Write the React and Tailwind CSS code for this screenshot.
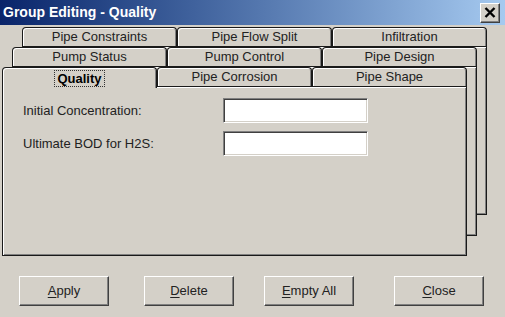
const font = { fontFamily: '"Liberation Sans", Arial, sans-serif' };

function Tab({ label, selected }) {
  if (selected) {
    return (
      <div className="relative z-10 w-[155px] h-[21px] -mb-[2px] bg-[#d4d0c8] border border-b-0 border-[#1a1a1a] rounded-t-[4px] shadow-[inset_1px_1px_#fff,inset_-1px_0_#808080] flex items-center justify-center">
        <span className="font-bold text-[13px] leading-[13px] text-black px-[2px] py-[1px] border border-dotted border-[#333]">
          {label}
        </span>
      </div>
    );
  }
  return (
    <div className="w-[155px] h-[19px] bg-[#d4d0c8] border border-b-0 border-[#1a1a1a] rounded-t-[4px] shadow-[inset_1px_1px_#fff,inset_-1px_0_#808080] flex items-center justify-center text-[13px] text-[#222]">
      {label}
    </div>
  );
}

function Page({ tabs, selected, bodyH, offset, children }) {
  return (
    <div className={`col-start-1 row-start-1 w-[465px] flex flex-col ${offset}`}>
      <div className="flex items-end h-[19px]">
        {tabs.map((t) => (
          <Tab key={t} label={t} selected={t === selected} />
        ))}
      </div>
      <div
        className="bg-[#d4d0c8] border border-[#1a1a1a] shadow-[inset_1px_1px_#fff,inset_-1px_-1px_#808080]"
        style={{ height: bodyH }}
      >
        {children}
      </div>
    </div>
  );
}

function Field({ label }) {
  return (
    <>
      <div className="h-[25px] flex items-center text-[13px] text-[#222]">{label}</div>
      <div className="h-[25px] bg-white border border-t-[#808080] border-l-[#808080] border-r-white border-b-white shadow-[inset_1px_1px_#404040,inset_-1px_-1px_#d4d0c8]" />
    </>
  );
}

function Button({ label, ml }) {
  const first = label[0];
  const rest = label.slice(1);
  return (
    <button
      className={`w-[90px] h-[30px] bg-[#d4d0c8] border border-t-white border-l-white border-r-[#404040] border-b-[#404040] shadow-[inset_-1px_-1px_#808080] text-[13px] text-[#222] flex items-center justify-center ${ml}`}
    >
      <span className="underline underline-offset-2">{first}</span>
      {rest}
    </button>
  );
}

export default function App() {
  return (
    <div className="w-[505px] h-[317px] bg-[#d4d0c8] flex flex-col overflow-hidden" style={font}>
      <div className="h-[25px] flex items-center justify-between bg-gradient-to-r from-[#0a246a] to-[#a6caf0] pl-[3px] pr-[5px]">
        <span className="text-white font-bold text-[14px]">Group Editing - Quality</span>
        <div className="w-[20px] h-[20px] bg-[#d4d0c8] border border-t-white border-l-white border-r-[#404040] border-b-[#404040] shadow-[inset_-1px_-1px_#808080] flex items-center justify-center">
          <svg width="12" height="11" viewBox="0 0 12 11">
            <path d="M1.5 1 L10.5 10 M10.5 1 L1.5 10" stroke="#000" strokeWidth="2.4" />
          </svg>
        </div>
      </div>

      <div className="grid">
        <Page
          tabs={["Pipe Constraints", "Pipe Flow Split", "Infiltration"]}
          bodyH={169}
          offset="ml-[22px] mt-[2px]"
        />
        <Page
          tabs={["Pump Status", "Pump Control", "Pipe Design"]}
          bodyH={170}
          offset="ml-[12px] mt-[22px]"
        />
        <Page
          tabs={["Quality", "Pipe Corrosion", "Pipe Shape"]}
          selected="Quality"
          bodyH={170}
          offset="ml-[2px] mt-[42px]"
        >
          <div className="pt-[11px] pl-[20px] grid grid-cols-[200px_145px] gap-y-[8px]">
            <Field label="Initial Concentration:" />
            <Field label="Ultimate BOD for H2S:" />
          </div>
        </Page>
      </div>

      <div className="flex mt-[20px]">
        <Button label="Apply" ml="ml-[19px]" />
        <Button label="Delete" ml="ml-[35px]" />
        <Button label="Empty All" ml="ml-[30px]" />
        <Button label="Close" ml="ml-[40px]" />
      </div>
    </div>
  );
}
